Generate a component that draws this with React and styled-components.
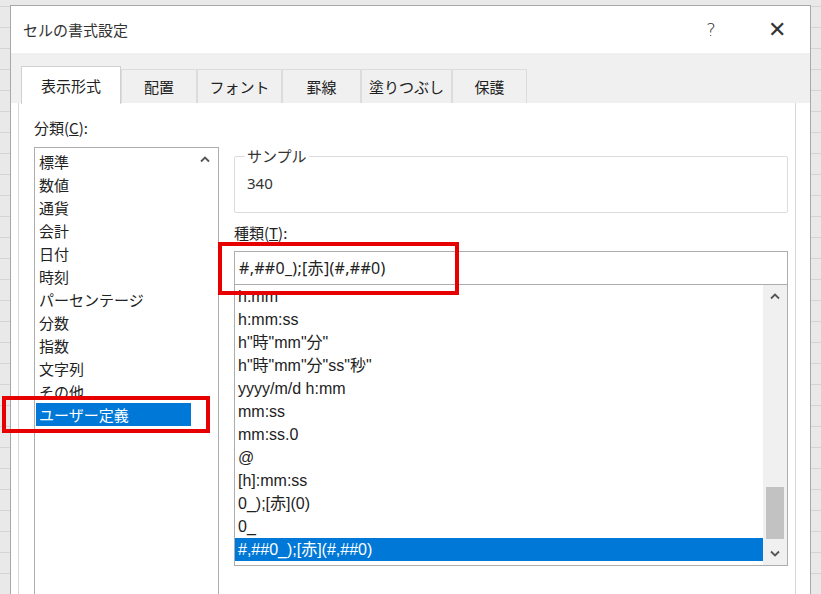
import React from "react";
import styled, { createGlobalStyle } from "styled-components";

const Global = createGlobalStyle`
  html, body { margin: 0; padding: 0; }
  body {
    width: 821px; height: 594px; overflow: hidden;
    background: #e6e6e6;
    font-family: "Noto Sans CJK JP", "Noto Sans", sans-serif;
    color: #222;
  }
`;

const Stage = styled.div`
  position: relative;
  width: 821px; height: 594px; overflow: hidden;
  padding: 5px 0 0 10px; box-sizing: border-box;
  background: repeating-linear-gradient(0deg, #e9e9e9 0 20px, #d4d4d4 20px 21px);
`;

const Dialog = styled.div`
  width: 801px; height: 600px;
  background: #fff;
  border: 1px solid #a8a8a8;
  box-sizing: border-box;
  display: flex; flex-direction: column;
`;

const TitleBar = styled.div`
  height: 47px; flex: none;
  display: flex; align-items: center;
  padding: 0 0 0 12px;
  font-size: 15px;
`;
const Title = styled.div` flex: 1; color: #333; `;
const TitleBtn = styled.div`
  width: 66px; text-align: center; font-size: ${p => p.$size || 17}px;
  color: #333; font-family: "DejaVu Sans", sans-serif; font-weight: 300;
`;

const TabStrip = styled.div`
  height: 50px; flex: none; background: #f0f0f0;
  display: flex; align-items: flex-end; padding-left: 10px;
`;
const Tab = styled.div`
  height: ${p => (p.$active ? 38 : 34)}px;
  width: ${p => p.$w}px;
  box-sizing: border-box;
  display: flex; align-items: center; justify-content: center;
  font-size: 15px; color: #222;
  background: ${p => (p.$active ? "#fff" : "#f0f0f0")};
  border: 1px solid ${p => (p.$active ? "#d0d0d0" : "#dcdcdc")};
  border-bottom: none;
  margin-bottom: ${p => (p.$active ? -1 : 0)}px;
  position: relative;
`;

const Panel = styled.div`
  flex: 1; display: flex;
  margin: 0 14px 0 7px;
  border-left: 1px solid #d6d6d6; border-right: 1px solid #d6d6d6;
  padding: 14px 0 0 15px;
  gap: 15px;
`;

const LeftCol = styled.div` width: 185px; display: flex; flex-direction: column; `;
const Label = styled.div`
  font-size: 15px; height: 30px; line-height: 22px; color: #222;
  u { text-decoration: underline; }
`;
const CatBox = styled.div`
  flex: 1; border: 1px solid #adadad; border-bottom: none;
  display: flex; position: relative;
`;
const CatList = styled.div` flex: 1; padding: 2px 0 0 1px; `;
const Item = styled.div`
  height: 23px; line-height: 23px; font-size: ${p => (p.$mono ? 16 : 15)}px; padding-left: 3px;
  color: ${p => (p.$sel ? "#fff" : "#222")};
  background: ${p => (p.$sel ? "#0078d7" : "transparent")};
  font-family: ${p => (p.$mono ? '"Liberation Sans", "Noto Sans CJK JP", sans-serif' : "inherit")};
  white-space: nowrap; overflow: hidden;
`;
const ScrollTrack = styled.div`
  width: ${p => p.$w || 27}px; flex: none; background: ${p => p.$bg || "#fff"};
  display: flex; flex-direction: column; align-items: center;
  position: relative;
`;
const Arrow = styled.div`
  height: 22px; display: flex; align-items: center; justify-content: center;
  color: #777;
`;

const RightCol = styled.div` width: 554px; display: flex; flex-direction: column; padding-top: 32px; `;
const Fieldset = styled.fieldset`
  margin: 0; padding: 6px 10px 8px 12px; height: 64px; box-sizing: border-box;
  border: 1px solid #dcdcdc; border-radius: 2px;
  legend { font-size: 15px; padding: 0 2px; margin-left: -2px; color: #333; line-height: 14px; }
`;
const Sample = styled.div` font-size: 15px; font-family: "Noto Sans", sans-serif; color: #333; margin-top: 4px;`;
const Kind = styled(Label)` margin-top: 8px; height: 30px; line-height: 24px; `;
const Input = styled.div`
  height: 34px; box-sizing: border-box; border: 1px solid #adadad;
  font-size: 16px; line-height: 32px; padding-left: 4px;
  font-family: "Noto Sans", "Noto Sans CJK JP", sans-serif; letter-spacing: 0.3px;
`;
const FmtBox = styled.div`
  height: 280px; border: 1px solid #adadad; border-top: none; display: flex;
`;
const FmtList = styled.div` flex: 1; padding-top: 0px; overflow: hidden; `;
const Thumb = styled.div`
  position: absolute; left: 3px; right: 3px; top: ${p => p.$top}px; height: ${p => p.$h}px;
  background: #c2c2c2;
`;

const RedBox = styled.div`
  position: absolute; border: 4px solid #e60000; box-sizing: border-box;
  left: ${p => p.$x}px; top: ${p => p.$y}px; width: ${p => p.$w}px; height: ${p => p.$h}px;
`;

const Chev = ({ up }) => (
  <svg width="12" height="8" viewBox="0 0 12 8">
    <path d={up ? "M2 6.5 L6 2.5 L10 6.5" : "M2 1.5 L6 5.5 L10 1.5"} fill="none" stroke="#555" strokeWidth="1.8" />
  </svg>
);

const cats = ["標準","数値","通貨","会計","日付","時刻","パーセンテージ","分数","指数","文字列","その他","ユーザー定義"];
const fmts = ['h:mm','h:mm:ss','h"時"mm"分"','h"時"mm"分"ss"秒"','yyyy/m/d h:mm','mm:ss','mm:ss.0','@','[h]:mm:ss','0_);[赤](0)','0_','#,##0_);[赤](#,##0)'];
const tabs = [["表示形式",100,true],["配置",76],["フォント",85],["罫線",79],["塗りつぶし",91],["保護",75]];

export default function App() {
  return (
    <Stage>
      <Global />
      <Dialog>
        <TitleBar>
          <Title>セルの書式設定</Title>
          <TitleBtn $size={18}>?</TitleBtn>
          <TitleBtn $size={22}>✕</TitleBtn>
        </TitleBar>
        <TabStrip>
          {tabs.map(([t, w, a]) => <Tab key={t} $w={w} $active={a}>{t}</Tab>)}
        </TabStrip>
        <Panel>
          <LeftCol>
            <Label>分類(<u>C</u>):</Label>
            <CatBox>
              <CatList>
                {cats.map(c => <Item key={c} $sel={c === "ユーザー定義"}>{c}</Item>)}
              </CatList>
              <ScrollTrack>
                <Arrow><Chev up /></Arrow>
              </ScrollTrack>
            </CatBox>
          </LeftCol>
          <RightCol>
            <Fieldset>
              <legend>サンプル</legend>
              <Sample>340</Sample>
            </Fieldset>
            <Kind>種類(<u>T</u>):</Kind>
            <Input>#,##0_);[赤](#,##0)</Input>
            <FmtBox>
              <FmtList>
                {fmts.map((f, i) => <Item key={f} $mono $sel={i === fmts.length - 1}>{f}</Item>)}
              </FmtList>
              <ScrollTrack $w={24} $bg="#f0f0f0">
                <Arrow><Chev up /></Arrow>
                <Thumb $top={202} $h={52} />
                <div style={{ flex: 1 }} />
                <Arrow><Chev /></Arrow>
              </ScrollTrack>
            </FmtBox>
          </RightCol>
        </Panel>
      </Dialog>
      <RedBox $x={218} $y={242} $w={241} $h={53} />
      <RedBox $x={2} $y={396} $w={208} $h={37} />
    </Stage>
  );
}
